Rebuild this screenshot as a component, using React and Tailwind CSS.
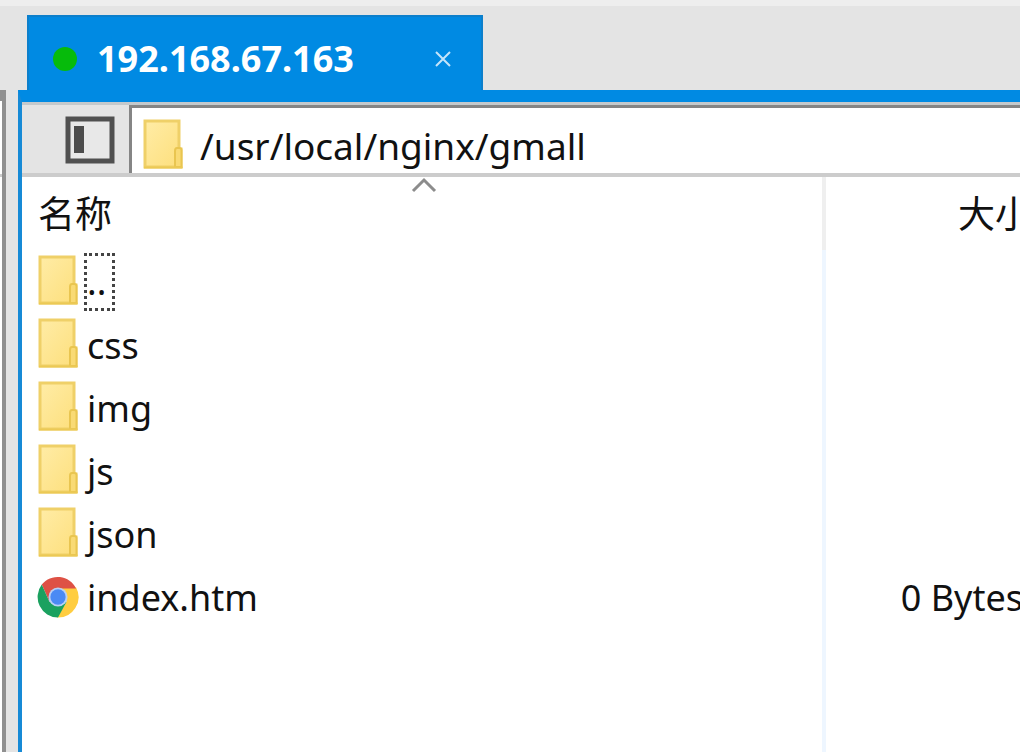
import React from "react";

const entries = [
  { name: "..", type: "folder", size: "", focused: true },
  { name: "css", type: "folder", size: "" },
  { name: "img", type: "folder", size: "" },
  { name: "js", type: "folder", size: "" },
  { name: "json", type: "folder", size: "" },
  { name: "index.htm", type: "html", size: "0 Bytes" },
];

function FolderIcon() {
  return (
    <svg width="42" height="54" viewBox="0 0 42 54" aria-hidden="true" className="shrink-0">
      <defs>
        <linearGradient id="folder-fill" x1="0" y1="0" x2="1" y2="1">
          <stop offset="0" stopColor="#ffeca6" />
          <stop offset="1" stopColor="#fddf7c" />
        </linearGradient>
      </defs>
      <path d="M3 2H37V30H39V48H3Z" fill="url(#folder-fill)" stroke="#efd068" strokeWidth="3" />
      <path d="M33 48V32Q33 29 35 29H37Q39.500 29 39.500 31V48Z" fill="#f9da74" stroke="#e9c550" strokeWidth="2" />
      <path d="M2 48.500H40.500" stroke="#ecc955" strokeWidth="2" />
    </svg>
  );
}

function ChromeIcon() {
  return (
    <svg width="42" height="44" viewBox="0 0 44 44" aria-hidden="true" className="shrink-0">
      <path d="M22 12H41A21.500 21.500 0 0 1 21 43.500L31 27Z" fill="#ffcd40" />
      <path d="M5 9A21.500 21.500 0 0 1 41 13H22L13 27Z" fill="#de5145" />
      <path d="M5 9A21.500 21.500 0 0 0 22 43.500L31 27H13Z" fill="#1aa15f" />
      <circle cx="22" cy="22" r="10" fill="#b9d0f5" />
      <circle cx="22" cy="22" r="8" fill="#4a8af4" />
    </svg>
  );
}

function PanelIcon() {
  return (
    <svg width="50" height="48" viewBox="0 0 50 48" aria-hidden="true">
      <rect x="3" y="3" width="44" height="42" fill="#e8e8e8" stroke="#505050" strokeWidth="5" />
      <rect x="9" y="10" width="10" height="27" fill="#4c4c4c" />
    </svg>
  );
}

function SessionTab() {
  return (
    <div className="ml-[7px] flex h-[75px] w-[456px] items-center border-2 border-b-0 border-[#0c7fcb] bg-[#008ae3] pt-[10px] pr-[28px] pl-[24px]">
      <button type="button" className="flex flex-1 items-center gap-[20px] text-left">
        <span className="size-[24px] rounded-full bg-[#06bb0b]" />
        <span className="text-[36px] leading-[48px] font-bold text-white">192.168.67.163</span>
      </button>
      <button type="button" aria-label="Close tab" className="p-0">
        <svg width="20" height="20" viewBox="0 0 20 20" aria-hidden="true">
          <path d="M3 3L17 17M17 3L3 17" stroke="#c4e4fa" strokeWidth="2" fill="none" />
        </svg>
      </button>
    </div>
  );
}

function FileTable() {
  return (
    <table className="w-[calc(100%+24px)] table-fixed border-separate border-spacing-0">
      <thead className="text-[37px]">
        <tr className="h-[73px]">
          <th scope="col" className="relative border-r-4 border-[#efefef] p-0 pl-[16px] text-left font-normal">
            <span className="absolute inset-x-0 top-0 flex justify-center pl-[4px]">
              <svg width="28" height="16" viewBox="0 0 28 16" aria-hidden="true">
                <path d="M3 14L14 3L25 14" fill="none" stroke="#8c8c8c" strokeWidth="3" />
              </svg>
            </span>
            名称
          </th>
          <th scope="col" className="w-[218px] p-0 pr-[12px] text-right font-normal">大小</th>
        </tr>
      </thead>
      <tbody>
        {entries.map((entry) => (
          <tr key={entry.name} className="h-[63px]">
            <td className="border-r-4 border-[#eef6ff] p-0 pl-[15px]">
              <div className="flex items-center gap-[5px]">
                {entry.type === "folder" ? <FolderIcon /> : <ChromeIcon />}
                <span
                  className={
                    entry.focused
                      ? "border-[3px] border-dotted border-[#444] pr-[6px] leading-[52px]"
                      : "border-x-[3px] border-transparent pt-[2px] leading-[52px]"
                  }
                >
                  {entry.name}
                </span>
              </div>
            </td>
            <td className="p-0 pt-[2px] pr-[21px] text-right whitespace-nowrap">{entry.size}</td>
          </tr>
        ))}
      </tbody>
    </table>
  );
}

export default function App() {
  return (
    <div className="flex min-h-screen overflow-hidden border-t-[6px] border-[#eeeeee] bg-[#e4e4e4] font-['Noto_Sans','Noto_Sans_CJK_SC',sans-serif] text-[36px] text-[#111]">
      <aside className="flex w-[20px] shrink-0 flex-col pt-[84px]">
        <div className="flex w-[6px] flex-1 flex-col border-t-[11px] border-r-4 border-[#909090] bg-white">
          <div className="h-[76px] border-b-[3px] border-[#cccccc]" />
        </div>
      </aside>
      <main className="flex min-w-0 flex-1 flex-col pt-[9px]">
        <SessionTab />
        <section className="-ml-[2px] flex flex-1 flex-col border-t-[12px] border-l-4 border-[#168ad6] border-t-[#008ae3] bg-white">
          <div className="flex h-[75px] border-t-[3px] border-b-4 border-t-[#c4c9cc] border-b-[#cccccc] bg-[#e4e4e4]">
            <button type="button" aria-label="Toggle side panel" className="flex w-[107px] shrink-0 items-center justify-end pt-[2px] pr-[14px]">
              <PanelIcon />
            </button>
            <label className="flex min-w-0 flex-1 items-center gap-[16px] border-t-[3px] border-l-[3px] border-[#858585] bg-white pt-[11px] pl-[10px]">
              <FolderIcon />
              <input
                type="text"
                aria-label="Path"
                defaultValue="/usr/local/nginx/gmall"
                className="min-w-0 flex-1 bg-transparent text-[37px] leading-[52px] outline-none"
              />
            </label>
          </div>
          <div className="flex flex-1 flex-col overflow-hidden">
            <FileTable />
            <div className="mr-[194px] flex-1 border-r-4 border-[#eef6ff]" />
          </div>
        </section>
      </main>
    </div>
  );
}
